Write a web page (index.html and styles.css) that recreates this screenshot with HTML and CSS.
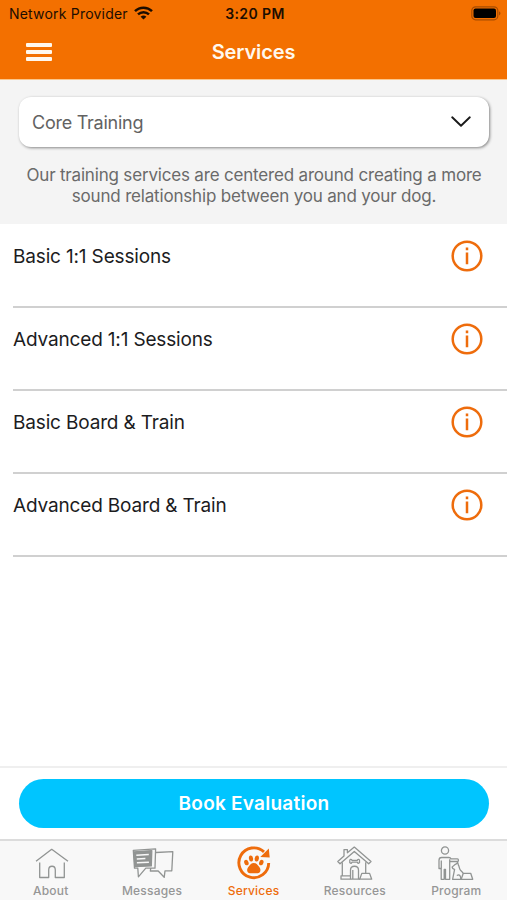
FILE: index.html
```
<!DOCTYPE html>
<html lang="en">
<head>
    <meta charset="UTF-8">
    <meta name="viewport" content="width=device-width, initial-scale=1.0">
    <title>Services</title>
    <link rel="stylesheet" href="styles.css">
</head>
<body>
    <div class="app">
        <header class="header">
            <div class="status-bar">
                <div class="carrier">
                    <span class="carrier-name">Network Provider</span>
                    <svg class="wifi" viewBox="0 0 19 14" fill="none" stroke="#1c0d00" stroke-width="2.5">
                        <path d="M1 5.2C5.7.6 13.3.6 18 5.2"/>
                        <path d="M4 8.4c3.1-2.9 7.9-2.9 11 0"/>
                        <path d="M6.6 10.7c1.7-1.5 4.1-1.5 5.8 0L9.5 13.6z" fill="#1c0d00" stroke="none"/>
                    </svg>
                </div>
                <span class="time">3:20 PM</span>
                <svg class="battery" viewBox="0 0 30 15">
                    <rect x="0.8" y="0.8" width="26" height="13" rx="3.8" fill="none" stroke="#a84c00" stroke-width="1.2"/>
                    <rect x="2.5" y="2.6" width="22.5" height="9.4" rx="2" fill="#000"/>
                    <path d="M28 5.2c2 .8 2 3.4 0 4.2z" fill="#a84c00"/>
                </svg>
            </div>
            <div class="nav-bar">
                <button class="menu" aria-label="Menu"><span></span><span></span><span></span></button>
                <h1>Services</h1>
            </div>
        </header>

        <section class="category">
            <div class="dropdown">
                <span>Core Training</span>
                <svg class="chevron" viewBox="0 0 20 12" fill="none" stroke="#1a1a1a" stroke-width="1.9" stroke-linecap="round" stroke-linejoin="round">
                    <path d="M1.2 1.3 10 9.8l8.8-8.5"/>
                </svg>
            </div>
            <p class="intro">Our training services are centered around creating a more<br>sound relationship between you and your dog.</p>
        </section>

        <ul class="services">
            <li>
                <span class="name">Basic 1:1 Sessions</span>
                <svg class="info" viewBox="0 0 32 32"><circle cx="16" cy="16" r="14.3"/><path d="M16 12.6v11.6M16 7.5v2.7"/></svg>
            </li>
            <li>
                <span class="name">Advanced 1:1 Sessions</span>
                <svg class="info" viewBox="0 0 32 32"><circle cx="16" cy="16" r="14.3"/><path d="M16 12.6v11.6M16 7.5v2.7"/></svg>
            </li>
            <li>
                <span class="name">Basic Board &amp; Train</span>
                <svg class="info" viewBox="0 0 32 32"><circle cx="16" cy="16" r="14.3"/><path d="M16 12.6v11.6M16 7.5v2.7"/></svg>
            </li>
            <li>
                <span class="name">Advanced Board &amp; Train</span>
                <svg class="info" viewBox="0 0 32 32"><circle cx="16" cy="16" r="14.3"/><path d="M16 12.6v11.6M16 7.5v2.7"/></svg>
            </li>
        </ul>

        <div class="booking">
            <button class="book">Book Evaluation</button>
        </div>

        <nav class="tabs">
            <a class="tab">
                <svg viewBox="0 0 42 36">
                    <path d="M6 15.3 21.7 3.3 38 15.3M9.7 16.5v15h9V24c0-5 6.6-5 6.6 0v7.5h9v-15"/>
                </svg>
                <span>About</span>
            </a>
            <a class="tab">
                <svg viewBox="0 0 42 36">
                    <path d="M25 6.5 41.8 5.6 40.8 24.8H34L33.2 31.3 27.2 25H19.3l.5-3"/>
                    <path d="M2.3 4.3 24.6 2.9 24 22.2H14.8L7.4 30.8 6.8 22.2H3.5z"/>
                    <path d="M2.8 5.8 20.8 4.6 20.3 19.9 4 20.6z" fill="#919493"/>
                    <path d="M5.3 9.2 17.8 8.5M5.8 13l8.6-.4M5.9 16.8l12-.5" stroke="#f8f8f8" stroke-width="1.5"/>
                </svg>
                <span>Messages</span>
            </a>
            <a class="tab active">
                <svg viewBox="0 0 42 36">
                    <path d="M31 5.9A14.9 14.9 0 1 0 35.7 17" stroke-width="2.9"/>
                    <g fill="#ee6c0c" stroke="none">
                        <path d="M35.8 2.4 36.7 11.4 27.3 11z"/>
                        <path d="M20.8 16.9c2.6 0 3.5 1.8 4.7 3.1 1.5 1.6 2.4 3.6 1.7 5.4-1 2.5-4.1 1.8-6.4 1.8s-5.4.7-6.4-1.8c-.7-1.8.2-3.8 1.7-5.4 1.2-1.3 2.1-3.1 4.7-3.1z"/>
                        <ellipse cx="13.4" cy="16.6" rx="2.1" ry="2.8" transform="rotate(-24 13.4 16.6)"/>
                        <ellipse cx="18" cy="12.5" rx="2.1" ry="3" transform="rotate(-8 18 12.5)"/>
                        <ellipse cx="23.8" cy="12.5" rx="2.1" ry="3" transform="rotate(8 23.8 12.5)"/>
                        <ellipse cx="28.3" cy="16.6" rx="2.1" ry="2.8" transform="rotate(24 28.3 16.6)"/>
                    </g>
                </svg>
                <span>Services</span>
            </a>
            <a class="tab">
                <svg viewBox="0 0 42 36">
                    <path d="M3.8 15.5 10 9.9V3.6h3.4v3.2l6.9-5.7L37 15.5l-2.3 2.3L20.3 5.4 6 17.8z"/>
                    <path d="M8.3 16.2v13.6H7v3.4h19M31.7 16.2v11M8.3 29.8h8"/>
                    <path d="M16.5 33.2v-9c0-5.3 8-5.3 8 0v9M18.8 24v9"/>
                    <path d="M18 14.4h5.3c.4-1.7 2.8-1.3 2.2.9.6 2.2-1.8 2.6-2.2.9H18c-.4 1.7-2.8 1.3-2.2-.9-.6-2.2 1.8-2.6 2.2-.9z"/>
                    <path d="M27.8 27.4h7.8l2.1 5.8h-12z"/>
                </svg>
                <span>Resources</span>
            </a>
            <a class="tab">
                <svg viewBox="0 0 42 36">
                    <circle cx="10" cy="4.5" r="3.6"/>
                    <path d="M6.2 33.3V22.5H4v-8.2c0-1.8 1-2.8 2.7-2.8h7.2c1.3 0 1.8.5 2.2 1.4h6.3c1.4 0 1.4 2.6 0 2.6h-7.7v17.8h-4.2V23.5H9.2v9.8zM6.3 14.5v8M14.7 13.2v2.3"/>
                    <path d="M17.2 20.6c1.8-.2 2-2.4 4.2-2.7l1.2-1.6.8 2.8c1.2 1.7.5 3.6 2.1 5.2 1.4 1.3 2.2 2 2.6 3M17.2 20.6c-.2 2.2 1.4 2.5 2.4 2.7l-2 10h9M21.8 29.5c2.8-1.6 4 .2 4 3.8"/>
                    <path d="M28.3 27.3h7.4l2 6H26.2z"/>
                </svg>
                <span>Program</span>
            </a>
        </nav>
    </div>
</body>
</html>
```
FILE: styles.css
```
* {
    box-sizing: border-box;
}

body {
    margin: 0;
    font-family: Inter, "Liberation Sans", sans-serif;
    background: #fff;
    color: #1c1c1e;
}

button {
    border: none;
    padding: 0;
    font-family: inherit;
}

.app {
    display: flex;
    flex-direction: column;
    height: 900px;
}

/* Header */
.header {
    height: 80px;
    background: #f37000;
    border-bottom: 1px solid #fbc78c;
}

.status-bar {
    display: grid;
    grid-template-columns: 1fr auto 1fr;
    align-items: center;
    height: 27px;
    padding: 0 6px 0 9px;
    color: #1c0d00;
}

.carrier {
    display: flex;
    align-items: center;
    gap: 6px;
}

.carrier-name {
    font-size: 14px;
    letter-spacing: 0.2px;
}

.wifi {
    width: 19px;
    height: 14px;
    margin-top: -2px;
}

.time {
    font-size: 14px;
    font-weight: 600;
    letter-spacing: 0.4px;
}

.battery {
    justify-self: end;
    width: 30px;
    height: 15px;
}

.nav-bar {
    display: grid;
    grid-template-columns: 1fr auto 1fr;
    align-items: center;
    height: 50px;
    padding: 0 26px;
}

.nav-bar h1 {
    margin: 0;
    font-size: 20px;
    font-weight: 600;
    letter-spacing: -0.1px;
    color: #fff8ee;
}

.menu {
    display: flex;
    flex-direction: column;
    gap: 3px;
    width: 26px;
    background: none;
}

.menu span {
    height: 4px;
    border-radius: 1px;
    background: #fff8ee;
}

/* Category picker */
.category {
    height: 144px;
    padding: 17px 18px 0 19px;
    background: #f4f4f4;
}

.dropdown {
    display: flex;
    align-items: center;
    justify-content: space-between;
    height: 50px;
    padding: 0 18px 0 13px;
    border-radius: 12px;
    background: #fff;
    box-shadow: 1px 1px 3px rgba(0, 0, 0, 0.45);
    font-size: 18px;
    letter-spacing: -0.25px;
    color: #626262;
}

.chevron {
    width: 20px;
    height: 12px;
}

.intro {
    margin: 18px -6px 0;
    text-align: center;
    font-size: 17px;
    line-height: 21px;
    letter-spacing: -0.18px;
    white-space: nowrap;
    color: #6a6a6a;
}

/* Service list */
.services {
    flex: 1;
    margin: 0;
    padding: 1px 0 0 13px;
    list-style: none;
}

.services li {
    display: flex;
    align-items: flex-start;
    justify-content: space-between;
    height: 83px;
    padding: 15px 24px 0 0;
    border-bottom: 2px solid #d0d0d0;
}

.name {
    padding-top: 1px;
    font-size: 19px;
    line-height: 32px;
    letter-spacing: -0.16px;
}

.info {
    width: 32px;
    height: 32px;
    fill: none;
    stroke: #ee6c0c;
    stroke-width: 2.5;
}

/* Book button */
.booking {
    height: 73px;
    padding: 10px 18px 0 19px;
    border-top: 2px solid #efefef;
}

.book {
    width: 100%;
    height: 49px;
    margin-top: 1px;
    border-radius: 25px;
    background: #00c5ff;
    color: #fff;
    font-size: 19px;
    font-weight: 600;
    letter-spacing: 0.25px;
}

/* Tab bar */
.tabs {
    display: flex;
    height: 61px;
    border-top: 2px solid #dcdcdc;
    background: #f8f8f8;
}

.tab {
    flex: 1;
    display: flex;
    flex-direction: column;
    align-items: center;
    gap: 1px;
    padding-top: 5px;
    font-size: 12px;
    font-weight: 500;
    line-height: 16px;
    letter-spacing: 0.2px;
    color: #969696;
}

.tab svg {
    width: 42px;
    height: 36px;
    overflow: visible;
    fill: none;
    stroke: #919493;
    stroke-width: 1.3;
    stroke-linejoin: round;
}

.tab.active {
    color: #ee6c0c;
}

.tab.active svg {
    stroke: #ee6c0c;
}
```
